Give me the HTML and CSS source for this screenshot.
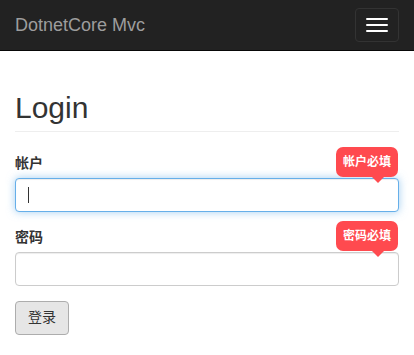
FILE: index.html
```html
<!DOCTYPE html>
<html lang="zh-CN">
<head>
    <meta charset="UTF-8">
    <title>Login - DotnetCore Mvc</title>
    <link rel="stylesheet" href="styles.css">
</head>
<body>
<div class="navbar">
    <a class="brand" href="#">DotnetCore Mvc</a>
    <button class="toggle" type="button">
        <span class="bar"></span>
        <span class="bar"></span>
        <span class="bar"></span>
    </button>
</div>
<div class="container">
    <h2 class="page-title">Login</h2>
    <form class="login">
        <div class="form-group">
            <label for="account">帐户</label>
            <div class="field">
                <input id="account" class="form-control is-focus" type="text">
                <span class="caret"></span>
                <span class="tip">帐户必填</span>
            </div>
        </div>
        <div class="form-group">
            <label for="password">密码</label>
            <div class="field">
                <input id="password" class="form-control" type="password">
                <span class="tip">密码必填</span>
            </div>
        </div>
        <button class="btn" type="button">登录</button>
    </form>
</div>
</body>
</html>
```

FILE: styles.css
```css
body {
    margin: 0;
    font-family: "Liberation Sans", Arial, "Noto Sans CJK SC", sans-serif;
    font-size: 14px;
    line-height: 1.42857;
    color: #333;
    background: #fff;
}
.navbar {
    height: 50px;
    background-color: #222;
    border-bottom: 1px solid #080808;
    display: flex;
    align-items: center;
    justify-content: space-between;
    padding: 0 15px;
}
.navbar .brand {
    color: #9d9d9d;
    font-size: 18px;
    line-height: 20px;
    text-decoration: none;
}
.navbar .toggle {
    width: 44px;
    height: 34px;
    background: transparent;
    border: 1px solid #333;
    border-radius: 4px;
    display: flex;
    flex-direction: column;
    align-items: center;
    justify-content: center;
    gap: 4px;
    padding: 0;
}
.navbar .toggle .bar {
    display: block;
    width: 22px;
    height: 2px;
    background: #fff;
    border-radius: 1px;
}
.container {
    padding: 0 15px;
}
.page-title {
    font-size: 30px;
    font-weight: 500;
    line-height: 33px;
    margin: 40px 0 21px;
    padding-bottom: 7px;
    border-bottom: 1px solid #eee;
}
.form-group {
    margin-bottom: 15px;
}
.form-group label {
    display: block;
    font-weight: bold;
    margin-bottom: 5px;
    line-height: 20px;
}
.field {
    position: relative;
}
.form-control {
    display: block;
    box-sizing: border-box;
    width: 100%;
    height: 34px;
    padding: 6px 12px;
    font: inherit;
    color: #555;
    background: #fff;
    border: 1px solid #ccc;
    border-radius: 4px;
    box-shadow: inset 0 1px 1px rgba(0, 0, 0, .075);
    outline: none;
}
.form-control.is-focus {
    border-color: #66afe9;
    box-shadow: inset 0 1px 1px rgba(0, 0, 0, .075), 0 0 8px rgba(102, 175, 233, .6);
}
.caret {
    position: absolute;
    left: 13px;
    top: 9px;
    width: 1px;
    height: 16px;
    background: #333;
}
.tip {
    position: absolute;
    right: 1px;
    bottom: 35px;
    background: #ff4a4f;
    color: #fff;
    font-size: 12px;
    font-weight: bold;
    line-height: 30px;
    padding: 0 7px;
    border-radius: 7px;
    white-space: nowrap;
}
.tip::after {
    content: "";
    position: absolute;
    top: 100%;
    right: 14px;
    border: 6px solid transparent;
    border-top-color: #ff4a4f;
    border-bottom: 0;
}
.btn {
    display: inline-block;
    height: 34px;
    padding: 6px 12px;
    font: inherit;
    color: #333;
    background-color: #e6e6e6;
    border: 1px solid #adadad;
    border-radius: 4px;
}
```
